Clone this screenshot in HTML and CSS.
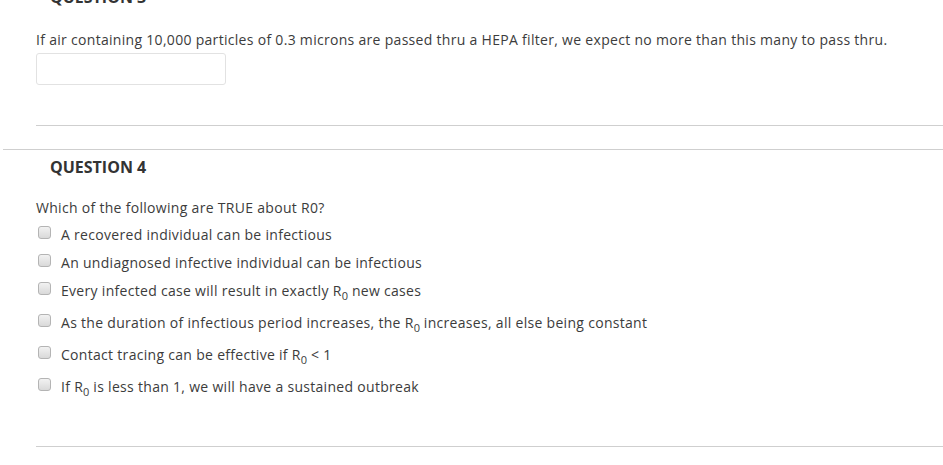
FILE: index.html
```html
<!DOCTYPE html>
<html>
<head>
<meta charset="utf-8">
<link rel="stylesheet" href="styles.css">
</head>
<body>
<div class="q3">
  <h3 class="qhead">QUESTION 3</h3>
  <p class="qtext">If air containing 10,000 particles of 0.3 microns are passed thru a HEPA filter, we expect no more than this many to pass thru.</p>
  <div class="answer-box"></div>
  <div class="rule"></div>
</div>
<div class="q4">
  <h3 class="qhead">QUESTION 4</h3>
  <div class="q4-body">
    <p class="qtext">Which of the following are TRUE about R0?</p>
    <ul class="options">
      <li class="opt"><span class="cb"></span><span class="lbl">A recovered individual can be infectious</span></li>
      <li class="opt"><span class="cb"></span><span class="lbl">An undiagnosed infective individual can be infectious</span></li>
      <li class="opt"><span class="cb"></span><span class="lbl">Every infected case will result in exactly R<sub>0</sub> new cases</span></li>
      <li class="opt"><span class="cb"></span><span class="lbl">As the duration of infectious period increases, the R<sub>0</sub> increases, all else being constant</span></li>
      <li class="opt"><span class="cb"></span><span class="lbl">Contact tracing can be effective if R<sub>0</sub> &lt; 1</span></li>
      <li class="opt"><span class="cb"></span><span class="lbl">If R<sub>0</sub> is less than 1, we will have a sustained outbreak</span></li>
    </ul>
    <div class="rule bottom"></div>
  </div>
</div>
</body>
</html>
```
FILE: styles.css
```css
html, body {
  margin: 0;
  padding: 0;
  background: #fff;
}
body {
  font-family: "Open Sans", "Liberation Sans", sans-serif;
  font-size: 14px;
  line-height: 20px;
  color: #3c3c3c;
  overflow: hidden;
}
.qhead {
  margin: 0;
  font-size: 16px;
  line-height: 20px;
  font-weight: 700;
  color: #333;
}
.qtext {
  margin: 0;
  letter-spacing: 0.3px;
}
.q3 {
  padding-left: 36px;
}
.q3 .qhead {
  margin-top: -13px;
  margin-left: 14px;
}
.q3 .qtext {
  margin-top: 23px;
}
.answer-box {
  margin-top: 3px;
  width: 188px;
  height: 30px;
  border: 1px solid #e2e2e2;
  border-radius: 3px;
}
.rule {
  height: 1px;
  background: #cfcfcf;
  margin-top: 40px;
}
.q4 {
  margin-left: 3px;
  margin-top: 23px;
  border-top: 1px solid #cfcfcf;
  padding-top: 7px;
}
.q4 .qhead {
  margin-left: 47px;
}
.q4-body {
  padding-left: 33px;
}
.q4-body .qtext {
  margin-top: 21px;
}
.options {
  list-style: none;
  margin: 3px 0 0;
  padding: 0;
}
.opt {
  display: flex;
  align-items: flex-start;
  padding: 4px 0;
}
.cb {
  flex: none;
  width: 11px;
  height: 11px;
  margin: 1px 10px 0 2px;
  border: 1px solid #b4b4b4;
  border-radius: 3px;
  background: linear-gradient(#f2f2f2, #d9d9d9);
}
.lbl {
  letter-spacing: 0.3px;
}
.lbl sub {
  font-size: 11px;
  line-height: 19px;
  vertical-align: -4px;
  letter-spacing: 0;
}
.rule.bottom {
  margin-top: 41px;
}
```
